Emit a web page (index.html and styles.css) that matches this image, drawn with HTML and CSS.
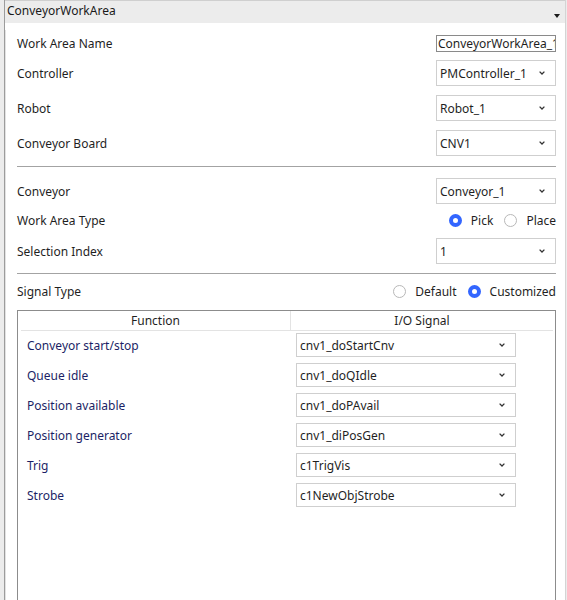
FILE: index.html
```html
<!DOCTYPE html>
<html>
<head>
<meta charset="utf-8">
<link rel="stylesheet" href="styles.css">
</head>
<body>
<div class="panel">
  <div class="hdr"><span class="hdr-title">ConveyorWorkArea</span><span class="tri"></span></div>
  <div class="content">
    <div class="row r-wan"><span class="lbl">Work Area Name</span><div class="input">ConveyorWorkArea_1</div></div>
    <div class="row r-ctl"><span class="lbl">Controller</span><div class="select"><span>PMController_1</span><svg class="chev" width="6" height="4" viewBox="0 0 6 4"><path d="M0.6 0.6 L3 3 L5.4 0.6" fill="none" stroke="#333" stroke-width="1.3"/></svg></div></div>
    <div class="row r-sel"><span class="lbl">Robot</span><div class="select"><span>Robot_1</span><svg class="chev" width="6" height="4" viewBox="0 0 6 4"><path d="M0.6 0.6 L3 3 L5.4 0.6" fill="none" stroke="#333" stroke-width="1.3"/></svg></div></div>
    <div class="row r-sel"><span class="lbl">Conveyor Board</span><div class="select"><span>CNV1</span><svg class="chev" width="6" height="4" viewBox="0 0 6 4"><path d="M0.6 0.6 L3 3 L5.4 0.6" fill="none" stroke="#333" stroke-width="1.3"/></svg></div></div>
    <div class="divider d1"></div>
    <div class="row r-conv"><span class="lbl">Conveyor</span><div class="select"><span>Conveyor_1</span><svg class="chev" width="6" height="4" viewBox="0 0 6 4"><path d="M0.6 0.6 L3 3 L5.4 0.6" fill="none" stroke="#333" stroke-width="1.3"/></svg></div></div>
    <div class="row r-wat"><span class="lbl">Work Area Type</span>
      <div class="radios">
        <span class="opt"><span class="radio on"></span>Pick</span>
        <span class="opt"><span class="radio"></span>Place</span>
      </div>
    </div>
    <div class="row r-si"><span class="lbl">Selection Index</span><div class="select"><span>1</span><svg class="chev" width="6" height="4" viewBox="0 0 6 4"><path d="M0.6 0.6 L3 3 L5.4 0.6" fill="none" stroke="#333" stroke-width="1.3"/></svg></div></div>
    <div class="divider d2"></div>
    <div class="row r-st"><span class="lbl">Signal Type</span>
      <div class="radios">
        <span class="opt"><span class="radio"></span>Default</span>
        <span class="opt"><span class="radio on"></span>Customized</span>
      </div>
    </div>
    <div class="table">
      <div class="thead"><div class="th th1">Function</div><div class="th th2">I/O Signal</div></div>
      <div class="tbody">
        <div class="tr"><div class="fn">Conveyor start/stop</div><div class="cell"><div class="select tsel"><span>cnv1_doStartCnv</span><svg class="chev" width="6" height="4" viewBox="0 0 6 4"><path d="M0.6 0.6 L3 3 L5.4 0.6" fill="none" stroke="#333" stroke-width="1.3"/></svg></div></div></div>
        <div class="tr"><div class="fn">Queue idle</div><div class="cell"><div class="select tsel"><span>cnv1_doQIdle</span><svg class="chev" width="6" height="4" viewBox="0 0 6 4"><path d="M0.6 0.6 L3 3 L5.4 0.6" fill="none" stroke="#333" stroke-width="1.3"/></svg></div></div></div>
        <div class="tr"><div class="fn">Position available</div><div class="cell"><div class="select tsel"><span>cnv1_doPAvail</span><svg class="chev" width="6" height="4" viewBox="0 0 6 4"><path d="M0.6 0.6 L3 3 L5.4 0.6" fill="none" stroke="#333" stroke-width="1.3"/></svg></div></div></div>
        <div class="tr"><div class="fn">Position generator</div><div class="cell"><div class="select tsel"><span>cnv1_diPosGen</span><svg class="chev" width="6" height="4" viewBox="0 0 6 4"><path d="M0.6 0.6 L3 3 L5.4 0.6" fill="none" stroke="#333" stroke-width="1.3"/></svg></div></div></div>
        <div class="tr"><div class="fn">Trig</div><div class="cell"><div class="select tsel"><span>c1TrigVis</span><svg class="chev" width="6" height="4" viewBox="0 0 6 4"><path d="M0.6 0.6 L3 3 L5.4 0.6" fill="none" stroke="#333" stroke-width="1.3"/></svg></div></div></div>
        <div class="tr"><div class="fn">Strobe</div><div class="cell"><div class="select tsel"><span>c1NewObjStrobe</span><svg class="chev" width="6" height="4" viewBox="0 0 6 4"><path d="M0.6 0.6 L3 3 L5.4 0.6" fill="none" stroke="#333" stroke-width="1.3"/></svg></div></div></div>
      </div>
    </div>
  </div>
</div>
</body>
</html>
```
FILE: styles.css
```css
* { box-sizing: border-box; }
html, body { margin: 0; padding: 0; }
body {
  background: #ececec;
  font-family: "Noto Sans", "Open Sans", sans-serif;
  font-size: 12px;
  color: #1f1f1f;
  width: 567px;
  height: 600px;
  overflow: hidden;
}
.panel {
  margin-left: 4px;
  width: 562px;
  border-left: 1px solid #9c9c9c;
  border-right: 1px solid #d4d4d4;
  background: #fff;
  min-height: 640px;
}
.hdr {
  height: 23px;
  background: #ececec;
  border-top: 1px solid #cfcfcf;
  display: flex;
  align-items: center;
  justify-content: space-between;
  padding: 0 5px 0 2px;
  line-height: 1;
}
.hdr-title { color: #1a1a1a; margin-top: -2px; }
.tri {
  width: 0; height: 0;
  border-left: 3.5px solid transparent;
  border-right: 3.5px solid transparent;
  border-top: 4px solid #1a1a1a;
  margin-top: 7px;
}
.content {
  padding: 0 9px 0 12px;
  box-shadow: inset 1px 0 0 #e2e2e2;
}
.row {
  display: flex;
  align-items: center;
  justify-content: space-between;
  height: 26px;
}
.lbl { color: #1f1f1f; }
.r-wan { margin-top: 7px; }
.r-ctl { margin-top: 4px; }
.r-sel { margin-top: 9px; }
.r-conv { margin-top: 11px; }
.r-wat { margin-top: 3px; }
.r-si { margin-top: 5px; }
.r-st { margin-top: 5px; height: 24px; }
.input {
  width: 120px;
  height: 17px;
  border: 1px solid #8a8a8a;
  padding-left: 1px;
  white-space: nowrap;
  overflow: hidden;
  line-height: 15px;
  color: #1f1f1f;
}
.select {
  width: 120px;
  height: 26px;
  border: 1px solid #cfcfcf;
  display: flex;
  align-items: center;
  justify-content: space-between;
  padding: 0 10px 0 3px;
  color: #1f1f1f;
}
.chev { display: block; margin-top: -1px; }
.divider { height: 1px; background: #a3a3a3; }
.d1 { margin-top: 10px; }
.d2 { margin-top: 9px; }
.radios { display: flex; align-items: center; gap: 11px; }
.opt { display: flex; align-items: center; }
.radio {
  width: 13px; height: 13px;
  border-radius: 50%;
  border: 1.5px solid #b8b8b8;
  margin-right: 9px;
  background: #fff;
}
.radio.on { border: 4px solid #3366ff; }
.table {
  margin-top: 7px;
  border: 1px solid #8c8c8c;
  height: 320px;
  padding: 0 2px 0 3px;
}
.thead {
  display: flex;
  height: 20px;
  border-bottom: 1px solid #e3e3e3;
  align-items: stretch;
}
.th { display: flex; align-items: center; justify-content: center; color: #1f1f1f; }
.th1 { width: 269px; }
.th2 { flex: 1; border-left: 1px solid #e3e3e3; }
.tbody { display: flex; flex-direction: column; gap: 6px; padding-top: 2px; }
.tr { display: flex; align-items: center; height: 24px; }
.fn { width: 269px; padding-left: 6px; color: #1b1f66; }
.cell { padding-left: 6px; }
.tsel { width: 220px; height: 24px; }
```
